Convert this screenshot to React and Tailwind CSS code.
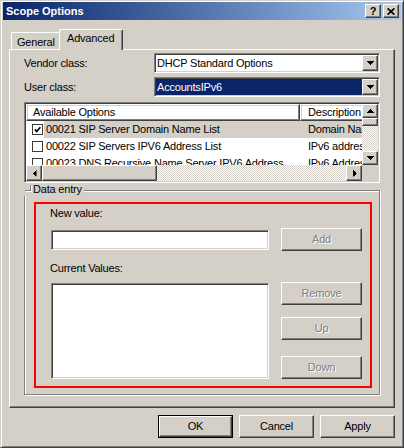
import React from 'react';

const raised =
  'border border-t-white border-l-white border-r-[#404040] border-b-[#404040] shadow-[inset_-1px_-1px_0_#808080,inset_1px_1px_0_#d4d0c8]';
const sunken =
  'border border-t-[#808080] border-l-[#808080] border-r-white border-b-white shadow-[inset_1px_1px_0_#404040,inset_-1px_-1px_0_#d4d0c8]';
const dither =
  'bg-[image:repeating-conic-gradient(#ffffff_0%_25%,#d4d0c8_0%_50%)] bg-[length:2px_2px]';

// small pixel triangle, pointing down by default
const Tri = ({ className = '' }) => (
  <svg width="7" height="4" className={className} shapeRendering="crispEdges">
    <path d="M0 0h7v1h-1v1h-1v1h-1v1h-1v-1h-1v-1h-1v-1h-1z" fill="#000" />
  </svg>
);

const Btn = ({ children, disabled, className = '' }) => (
  <div
    className={`${raised} flex items-center justify-center bg-[#d4d0c8] ${
      disabled ? 'text-[#808080] [text-shadow:1px_1px_0_#ffffff]' : ''
    } ${className}`}
  >
    {children}
  </div>
);

const Combo = ({ value, selected }) => (
  <div className={`${sunken} w-[226px] h-[20px] bg-white flex p-[1px]`}>
    <div className="flex-1 flex items-center">
      <span
        className={`flex-1 h-full flex items-center pl-[1px] ${
          selected ? 'bg-[#0a246a] text-white' : ''
        }`}
      >
        {value}
      </span>
    </div>
    <Btn className="w-[16px] h-[16px]">
      <Tri />
    </Btn>
  </div>
);

const Check = ({ on }) => (
  <div className="w-[11px] h-[11px] border border-[#3c3c3c] bg-white flex items-center justify-center">
    {on && (
      <svg width="7" height="7">
        <path d="M0.8 3.4 L2.8 5.4 L6.4 1.2" stroke="#000" strokeWidth="1.7" fill="none" />
      </svg>
    )}
  </div>
);

const rows = [
  { on: true, name: '00021 SIP Server Domain Name List', desc: 'Domain Name List', hl: true },
  { on: false, name: '00022 SIP Servers IPV6 Address List', desc: 'IPv6 addresses' },
  { on: false, name: '00023 DNS Recursive Name Server IPV6 Address', desc: 'IPv6 Address' },
];

export default function App() {
  return (
    <div className="w-[404px] h-[448px] bg-[#d4d0c8] border border-t-[#d4d0c8] border-l-[#d4d0c8] border-r-[#404040] border-b-[#404040] shadow-[inset_1px_1px_0_#ffffff,inset_-1px_-1px_0_#808080] px-[2px] pt-[1px] flex flex-col font-['Liberation_Sans',Arial,sans-serif] text-[11px] leading-[13px] tracking-[-0.2px] text-black overflow-hidden">
      {/* title bar */}
      <div className="h-[18px] flex items-center bg-linear-to-r from-[#0a246a] to-[#a6caf0] pl-[3px] pr-[2px]">
        <span className="flex-1 font-bold text-white tracking-normal">Scope Options</span>
        <Btn className="w-[16px] h-[14px] font-bold text-[11px] leading-none tracking-normal">?</Btn>
        <Btn className="w-[16px] h-[14px] ml-[2px]">
          <svg width="8" height="7">
            <path d="M0.6 0.4 L7.4 6.6 M7.4 0.4 L0.6 6.6" stroke="#000" strokeWidth="1.7" />
          </svg>
        </Btn>
      </div>

      {/* tabs */}
      <div className="mx-[6px] mt-[9px]">
        <div className="flex items-end h-[20px]">
          <div className="ml-[2px] w-[48px] h-[17px] border-t border-l border-white rounded-tl-[2px] pl-[5px] pt-[3px]">
            General
          </div>
          <div className="relative z-10 w-[64px] h-[21px] -mb-px bg-[#d4d0c8] border-t border-l border-white border-r border-r-[#404040] shadow-[inset_-1px_0_0_#808080] rounded-t-[2px] pl-[7px] pt-[2px]">
            Advanced
          </div>
        </div>

        <div className="h-[359px] border border-t-white border-l-white border-r-[#404040] border-b-[#404040] shadow-[inset_-1px_-1px_0_#808080] flex flex-col px-[14px]">
          <div className="flex items-center mt-[3px]">
            <span className="w-[130px]">Vendor class:</span>
            <Combo value="DHCP Standard Options" />
          </div>
          <div className="flex items-center mt-[4px]">
            <span className="w-[130px]">User class:</span>
            <Combo value="AccountsIPv6" selected />
          </div>

          {/* options list */}
          <div className={`${sunken} mt-[5px] h-[81px] bg-white flex flex-col p-[1px]`}>
            <div className="flex flex-1 min-h-0">
              <div className="flex-1 min-w-0 overflow-hidden flex flex-col">
                <div className="flex h-[17px] shrink-0 whitespace-nowrap">
                  <div className={`${raised} w-[274px] shrink-0 flex items-center pl-[6px]`}>Available Options</div>
                  <div className={`${raised} w-[120px] shrink-0 flex items-center pl-[7px]`}>Description</div>
                </div>
                {rows.map((r) => (
                  <div key={r.name} className="flex h-[17px] shrink-0 whitespace-nowrap">
                    <div className="w-[18px] shrink-0 flex items-center pl-[6px]">
                      <Check on={r.on} />
                    </div>
                    <div className={`w-[256px] shrink-0 flex items-center pl-[2px] ${r.hl ? 'bg-[#d4d0c8]' : ''}`}>
                      {r.name}
                    </div>
                    <div className={`w-[120px] shrink-0 flex items-center pl-[8px] ${r.hl ? 'bg-[#d4d0c8]' : ''}`}>
                      {r.desc}
                    </div>
                  </div>
                ))}
              </div>
              <div className="w-[16px] shrink-0 flex flex-col">
                <Btn className="h-[14px] shrink-0">
                  <Tri className="rotate-180" />
                </Btn>
                <div className={`${raised} h-[8px] shrink-0 bg-[#d4d0c8]`} />
                <div className={`flex-1 ${dither}`} />
                <Btn className="h-[14px] shrink-0">
                  <Tri />
                </Btn>
              </div>
            </div>
            <div className="flex h-[16px] shrink-0">
              <Btn className="w-[16px]">
                <Tri className="rotate-90" />
              </Btn>
              <div className={`${raised} w-[115px] bg-[#d4d0c8]`} />
              <div className={`flex-1 ${dither}`} />
              <Btn className="w-[16px]">
                <Tri className="-rotate-90" />
              </Btn>
              <div className="w-[16px] bg-[#d4d0c8]" />
            </div>
          </div>

          {/* data entry group */}
          <div className="relative mt-[7px] h-[205px] border border-[#808080] shadow-[1px_1px_0_#ffffff,inset_1px_1px_0_#ffffff] pl-[9px] pt-[11px]">
            <div className="absolute -left-px -top-[7px] h-[12px] flex items-start bg-[#d4d0c8] pr-[2px]">
              <div className="w-[6px] h-[6px] mt-[1px] ml-[1px] border-r border-b border-[#808080] shadow-[1px_1px_0_#ffffff]" />
              <span className="ml-[2px] -mt-[1px]">Data entry</span>
            </div>

            <div className="w-[338px] h-[186px] border-2 border-[#ff0000] pl-[15px] pt-[3px] flex flex-col">
              <div className="-ml-px">New value:</div>
              <div className="flex items-center mt-[8px] h-[23px]">
                <div className={`${sunken} w-[218px] h-[20px] bg-white`} />
                <Btn disabled className="ml-[12px] w-[81px] h-[23px]">
                  Add
                </Btn>
              </div>
              <div className="-ml-px mt-[11px]">Current Values:</div>
              <div className="flex mt-[8px]">
                <div className={`${sunken} w-[218px] h-[96px] bg-white`} />
                <div className="ml-[12px] -mt-px flex flex-col">
                  <Btn disabled className="w-[81px] h-[23px]">
                    Remove
                  </Btn>
                  <Btn disabled className="w-[81px] h-[23px] mt-[12px]">
                    Up
                  </Btn>
                  <Btn disabled className="w-[81px] h-[23px] mt-[16px]">
                    Down
                  </Btn>
                </div>
              </div>
            </div>
          </div>
        </div>
      </div>

      {/* dialog buttons */}
      <div className="flex justify-end gap-[6px] mt-[7px] mr-[6px]">
        <div className="w-[75px] h-[23px] border border-black flex">
          <Btn className="flex-1">OK</Btn>
        </div>
        <Btn className="w-[75px] h-[23px]">Cancel</Btn>
        <Btn className="w-[75px] h-[23px]">Apply</Btn>
      </div>
    </div>
  );
}
